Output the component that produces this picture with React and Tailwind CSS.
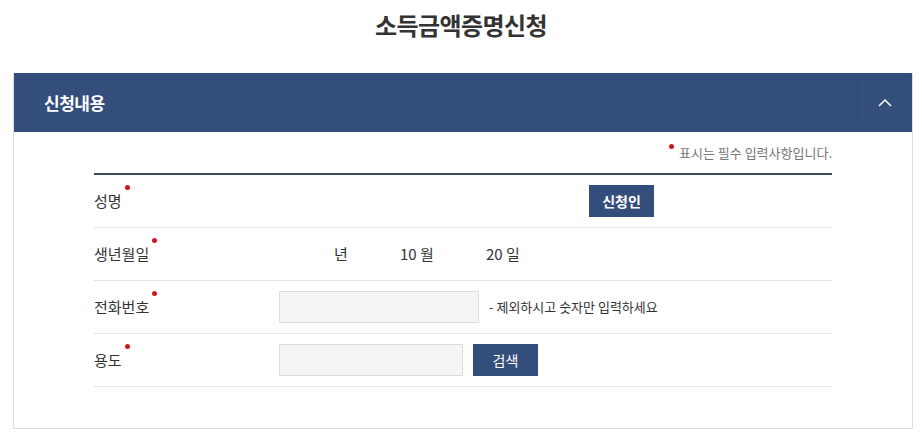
import React from "react";

const font = { fontFamily: '"Noto Sans CJK KR", "Noto Sans", sans-serif' };

function Dot() {
  return <span className="inline-block w-[5px] h-[5px] rounded-full bg-[#d0161d] relative -top-[14px] ml-[3px]" />;
}

function Row({ label, children }) {
  return (
    <div className="flex items-center h-[53px] border-b border-[#e5e5e5]">
      <div className="w-[185px] shrink-0 text-[15px] text-[#333] flex items-center">
        <span>{label}</span>
        <Dot />
      </div>
      <div className="flex-1 flex items-center">{children}</div>
    </div>
  );
}

export default function App() {
  return (
    <div className="w-[922px] h-[441px] bg-white overflow-hidden" style={font}>
      <h1 className="text-center text-[24px] font-bold text-[#333] pt-[6px] h-[73px] leading-[38px] tracking-[-0.6px]">소득금액증명신청</h1>
      <div className="mx-[13px] w-[900px] border border-t-0 border-[#dcdcdc]">
        <div className="h-[59px] bg-[#344e7c] flex items-center">
          <div className="flex-1 pl-[30px] text-white text-[17px] font-bold tracking-[-0.5px]">신청내용</div>
          <div className="w-px h-[42px] bg-[#2d4470]" />
          <div className="w-[54px] flex items-center justify-center">
            <svg width="14" height="9" viewBox="0 0 14 9" fill="none">
              <path d="M1 8L7 2L13 8" stroke="white" strokeWidth="1.5" />
            </svg>
          </div>
        </div>
        <div className="px-[80px] pt-[11px] pb-[41px]">
          <div className="h-[30px] flex justify-end items-start">
            <span className="inline-block w-[5px] h-[5px] rounded-full bg-[#d0161d] mt-[1px] mr-[5px]" />
            <span className="text-[13px] text-[#777] leading-[20px]">표시는 필수 입력사항입니다.</span>
          </div>
          <div className="border-t-2 border-[#3d4a5c]">
            <Row label="성명">
              <div className="w-[310px]" />
              <button className="w-[65px] h-[32px] bg-[#344e7c] text-white text-[14px] font-bold">신청인</button>
            </Row>
            <Row label="생년월일">
              <div className="flex items-center text-[15px] text-[#333]">
                <span className="w-[55px]" />
                <span className="w-[66px]">년</span>
                <span className="w-[86px]">10 월</span>
                <span>20 일</span>
              </div>
            </Row>
            <Row label="전화번호">
              <input className="w-[200px] h-[32px] bg-[#f4f4f4] border border-[#dcdcdc] outline-none" />
              <span className="ml-[10px] text-[13px] text-[#333]">- 제외하시고 숫자만 입력하세요</span>
            </Row>
            <Row label="용도">
              <input className="w-[184px] h-[32px] bg-[#f4f4f4] border border-[#dcdcdc] outline-none" />
              <button className="ml-[10px] w-[65px] h-[32px] bg-[#344e7c] text-white text-[14px]">검색</button>
            </Row>
          </div>
        </div>
      </div>
    </div>
  );
}
